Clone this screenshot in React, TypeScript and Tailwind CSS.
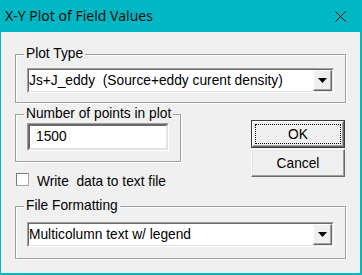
import type { ReactNode } from "react";

function GroupBox({ label, className, children }: { label: string; className?: string; children: ReactNode }) {
  return (
    <div
      className={`relative border border-[#a0a0a0] shadow-[inset_1px_1px_0_#fff,1px_1px_0_#fff] ${className ?? ""}`}
    >
      <span className="absolute left-[8px] top-[-9px] bg-[#f0f0f0] px-[2px] leading-[16px]">{label}</span>
      {children}
    </div>
  );
}

function DropButton() {
  return (
    <div className="flex h-full w-[19px] items-center justify-center border border-t-white border-l-white border-b-[#696969] border-r-[#696969] bg-[#f0f0f0] shadow-[inset_-1px_-1px_0_#a0a0a0]">
      <svg width="9" height="5" viewBox="0 0 9 5">
        <polygon points="0,0 9,0 4.5,5" fill="#000" />
      </svg>
    </div>
  );
}

function Combo({ value }: { value: string }) {
  return (
    <div className="h-[25px] border border-t-[#a0a0a0] border-l-[#a0a0a0] border-b-white border-r-white">
      <div className="flex h-full items-center border border-t-[#696969] border-l-[#696969] border-b-[#e3e3e3] border-r-[#e3e3e3] bg-white">
        <span className="flex-1 whitespace-pre leading-[15px]">{value}</span>
        <DropButton />
      </div>
    </div>
  );
}

export default function App() {
  return (
    <div className="flex h-[275px] w-[362px] flex-col bg-[#00b7c3] font-['Liberation_Sans',Arial,sans-serif] text-[13.75px] text-black">
      <div className="flex h-[32px] shrink-0 items-center justify-between pl-[5px] pr-[16px]">
        <span className="font-['Noto_Sans',sans-serif] text-[14px] leading-[20px] text-[#111]">X-Y Plot of Field Values</span>
        <svg width="11" height="11" viewBox="0 0 11 11">
          <path d="M0.5 0.5 L10.5 10.5 M10.5 0.5 L0.5 10.5" stroke="#000" strokeWidth="1" />
        </svg>
      </div>

      <div className="mb-[2px] ml-[1px] mr-[2px] flex flex-1 flex-col bg-[#f0f0f0] px-[14px] pt-[22px]">
        <GroupBox label="Plot Type" className="px-[11px] pt-[13px] pb-[9px]">
          <Combo value="Js+J_eddy  (Source+eddy curent density)" />
        </GroupBox>

        <div className="mt-[11px] flex items-start">
          <div className="flex w-[166px] flex-col">
            <GroupBox label="Number of points in plot" className="px-[11px] pt-[8px] pb-[10px]">
              <div className="h-[28px] border border-t-[#a0a0a0] border-l-[#a0a0a0] border-b-white border-r-white">
                <div className="flex h-full items-center border-2 border-t-[#696969] border-l-[#696969] border-b-[#e3e3e3] border-r-[#e3e3e3] bg-white pl-[6px]">
                  1500
                </div>
              </div>
            </GroupBox>

            <label className="ml-[1px] mt-[11px] flex h-[13px] items-center gap-[8px]">
              <span className="h-[13px] w-[13px] shrink-0 border border-t-[#7a7a7a] border-l-[#7a7a7a] border-b-[#a8a8a8] border-r-[#a8a8a8] bg-white" />
              <span className="whitespace-pre pt-[3px] leading-[15px]">Write  data to text file</span>
            </label>
          </div>

          <div className="ml-auto mr-[1px] mt-[6px] flex w-[94px] flex-col gap-[1px]">
            <button className="h-[28px] w-full border border-[#3c3c3c] bg-[#f0f0f0] p-0">
              <div className="h-full w-full border border-t-white border-l-white border-b-[#696969] border-r-[#696969] p-[2px] shadow-[inset_-1px_-1px_0_#a0a0a0]">
                <div className="flex h-full w-full items-center justify-center border border-dotted border-black leading-[15px]">
                  OK
                </div>
              </div>
            </button>
            <button className="flex h-[28px] w-full items-center justify-center border border-t-white border-l-white border-b-[#696969] border-r-[#696969] bg-[#f0f0f0] leading-[15px] shadow-[inset_-1px_-1px_0_#a0a0a0,inset_1px_1px_0_#e3e3e3]">
              Cancel
            </button>
          </div>
        </div>

        <GroupBox label="File Formatting" className="mt-[20px] px-[11px] pt-[15px] pb-[11px]">
          <Combo value="Multicolumn text w/ legend" />
        </GroupBox>
      </div>
    </div>
  );
}
